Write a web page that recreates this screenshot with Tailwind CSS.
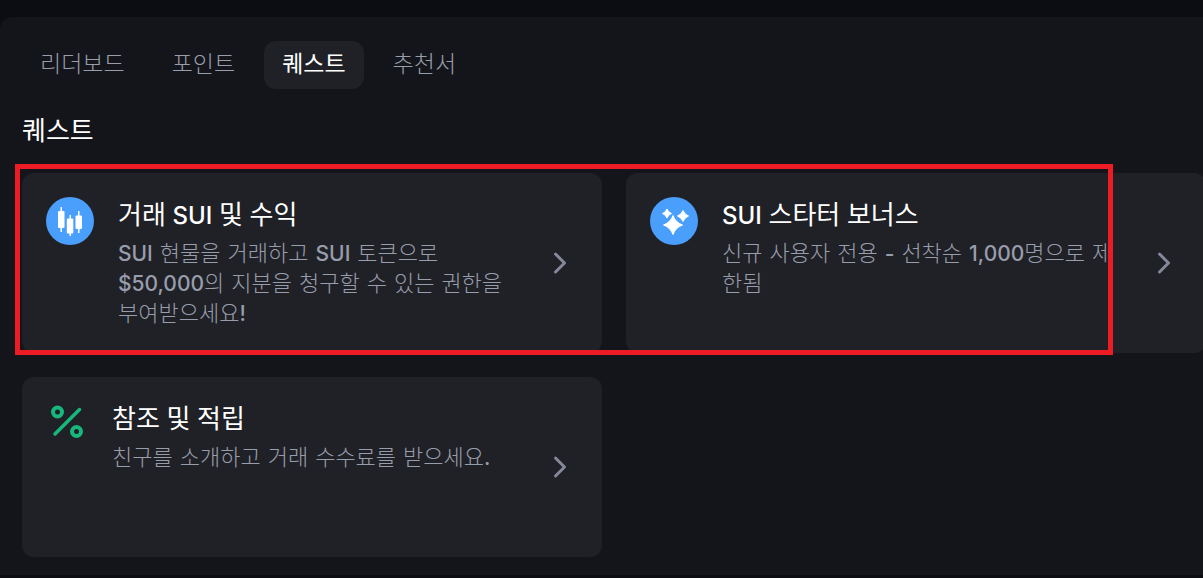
<!DOCTYPE html>
<html lang="ko">
<head>
    <meta charset="UTF-8">
    <meta name="viewport" content="width=device-width, initial-scale=1.0">
    <script src="https://cdn.jsdelivr.net/npm/@tailwindcss/browser@4"></script>
    <title>퀘스트</title>
</head>
<body class="bg-[#0c0d12] font-['Lato','Noto_Sans_CJK_KR',sans-serif] text-white overflow-x-hidden">
    <main class="relative mt-[17px] rounded-tl-xl bg-[#14151a] pt-6 pb-[18px] pl-[22px] overflow-hidden">

        <!-- Tabs -->
        <nav class="flex gap-[11px] text-[23px] font-light text-[#989dac]">
            <button class="h-12 rounded-xl px-[18px] pb-1">리더보드</button>
            <button class="h-12 rounded-xl px-[18px] pb-1">포인트</button>
            <button class="h-12 rounded-xl px-[18px] pb-1 bg-[#202126] font-normal text-white">퀘스트</button>
            <button class="h-12 rounded-xl px-[18px] pb-1">추천서</button>
        </nav>

        <h1 class="mt-5 mb-[22px] text-[26px] leading-[42px]">퀘스트</h1>

        <!-- Quest cards -->
        <div class="-mr-[3px] grid grid-cols-2 gap-6">
            <a href="#" class="flex min-h-[180px] items-start rounded-xl bg-[#202126] p-6">
                <svg class="size-12 shrink-0" viewBox="0 0 48 48" fill="none">
                    <circle cx="24" cy="24" r="24" fill="#4a9efc"/>
                    <g fill="#fff">
                        <rect x="12" y="14" width="6.500" height="17" rx="1"/>
                        <rect x="14.500" y="10" width="1.500" height="25" rx=".5"/>
                        <rect x="20.800" y="21.500" width="6.500" height="15" rx="1"/>
                        <rect x="23.500" y="18" width="1.500" height="21" rx=".5"/>
                        <rect x="29.500" y="18.500" width="6.500" height="13.500" rx="1"/>
                        <rect x="32" y="14" width="1.500" height="22" rx=".5"/>
                    </g>
                </svg>
                <div class="ml-6 min-w-0 flex-1">
                    <h2 class="text-[26px] leading-[34px]">거래 <span class="font-['Inter'] text-2xl leading-none font-medium">SUI</span> 및 수익</h2>
                    <p class="mt-2 font-['DejaVu_Sans','Noto_Sans_CJK_KR',sans-serif] text-[22px] leading-[30px] font-light text-[#989dac]"><span class="font-['Inter'] text-[21px] leading-none font-medium">SUI</span> 현물을 거래하고 <span class="font-['Inter'] text-[21px] leading-none font-medium">SUI</span> 토큰으로<br><span class="font-['Inter'] text-[21px] leading-none font-medium">$50,000</span>의 지분을 청구할 수 있는 권한을<br>부여받으세요<span class="font-['Inter'] text-[21px] leading-none font-medium">!</span></p>
                </div>
                <svg class="size-9 shrink-0 self-center" viewBox="0 0 36 36" fill="none" stroke="#85889a" stroke-width="3" stroke-linecap="round" stroke-linejoin="round">
                    <path d="m13.500 9 9 9-9 9"/>
                </svg>
            </a>

            <a href="#" class="flex min-h-[180px] items-start rounded-xl bg-[#202126] p-6">
                <svg class="size-12 shrink-0" viewBox="0 0 48 48" fill="none">
                    <circle cx="24" cy="24" r="24" fill="#4a9efc"/>
                    <g fill="#fff" stroke="#fff" stroke-width="1" stroke-linejoin="round">
                        <path d="M23 18.500q2.500 7 9.500 9.500-7 2.500-9.500 9.500-2.500-7-9.500-9.500 7-2.500 9.500-9.500Z"/>
                        <path d="M33 13.500q1.500 4 5.500 5.500-4 1.500-5.500 5.500-1.500-4-5.500-5.500 4-1.500 5.500-5.500Z"/>
                        <path d="M17 12q1.200 3.300 4.500 4.500-3.300 1.200-4.500 4.500-1.200-3.300-4.500-4.500 3.300-1.200 4.500-4.500Z"/>
                    </g>
                </svg>
                <div class="ml-6 min-w-0 flex-1">
                    <h2 class="text-[26px] leading-[34px]"><span class="font-['Inter'] text-2xl leading-none font-medium">SUI</span> 스타터 보너스</h2>
                    <p class="mt-2 font-['DejaVu_Sans','Noto_Sans_CJK_KR',sans-serif] text-[22px] leading-[30px] font-light text-[#989dac]">신규 사용자 전용 <span class="font-['Inter'] text-[21px] leading-none font-medium">-</span> 선착순 <span class="font-['Inter'] text-[21px] leading-none font-medium">1,000</span>명으로 제<br>한됨</p>
                </div>
                <svg class="size-9 shrink-0 self-center" viewBox="0 0 36 36" fill="none" stroke="#85889a" stroke-width="3" stroke-linecap="round" stroke-linejoin="round">
                    <path d="m13.500 9 9 9-9 9"/>
                </svg>
            </a>

            <a href="#" class="flex min-h-[180px] items-start rounded-xl bg-[#202126] p-6">
                <svg class="size-[42px] shrink-0" viewBox="0 0 42 42" fill="none" stroke="#16b87c" stroke-width="4" stroke-linecap="round">
                    <path stroke-width="3.500" d="M33.500 8.500 9 33"/>
                    <circle cx="11.500" cy="11" r="4.500"/>
                    <circle cx="30.500" cy="30.500" r="4.500"/>
                </svg>
                <div class="ml-6 min-w-0 flex-1">
                    <h2 class="text-[26px] leading-[34px]">참조 및 적립</h2>
                    <p class="mt-2 font-['DejaVu_Sans','Noto_Sans_CJK_KR',sans-serif] text-[22px] leading-[30px] font-light text-[#989dac]">친구를 소개하고 거래 수수료를 받으세요<span class="font-['Inter'] text-[21px] leading-none font-medium">.</span></p>
                </div>
                <svg class="size-9 shrink-0 self-center" viewBox="0 0 36 36" fill="none" stroke="#85889a" stroke-width="3" stroke-linecap="round" stroke-linejoin="round">
                    <path d="m13.500 9 9 9-9 9"/>
                </svg>
            </a>
        </div>

        <!-- Highlight frame over the first row -->
        <div class="pointer-events-none absolute top-[147px] left-[15px] right-[90px] h-[191px] border-5 border-[#ed1c24]"></div>
    </main>
</body>
</html>
